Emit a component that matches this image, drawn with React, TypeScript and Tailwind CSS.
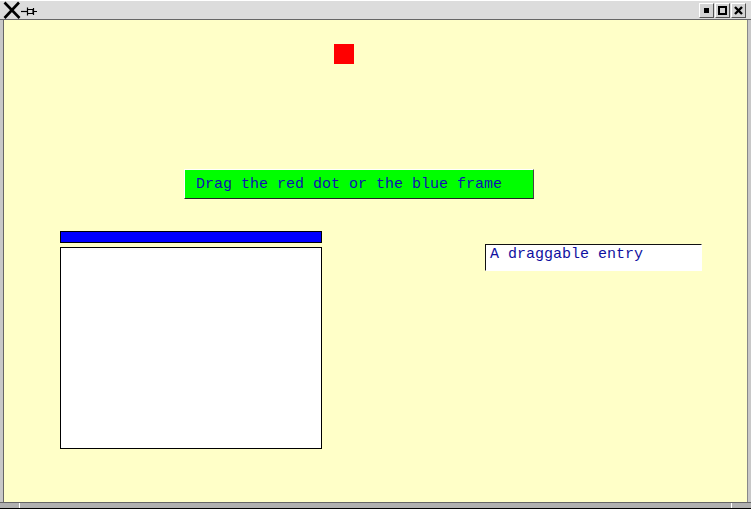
import React from "react";

const mono = { fontFamily: '"Liberation Mono", "DejaVu Sans Mono", monospace' };

function TitleButton({ children }: { children: React.ReactNode }) {
  return (
    <div className="flex h-[15px] w-[15px] items-center justify-center border border-t-white border-l-white border-b-[#555] border-r-[#555] bg-[#d4d4d4]">
      {children}
    </div>
  );
}

function TitleBar() {
  return (
    <div className="flex h-[20px] items-center justify-between border-t border-t-white border-b border-b-[#666] bg-[#dcdcdc] pl-[3px] pr-[5px]">
      <div className="flex items-center">
        <svg width="18" height="18" viewBox="0 0 18 18">
          <path d="M1.5 1.5 L16.5 17 M16 1.5 L1.5 17" stroke="#000" strokeWidth="2.6" />
        </svg>
        <svg width="17" height="17" viewBox="0 0 17 17">
          <path d="M0 9.5 H6" stroke="#000" strokeWidth="1.2" />
          <path d="M6.5 5.5 V13.5 M7 7.5 H12 V11.5 H7 M12.5 6 V13 M13 9.5 H16" stroke="#000" strokeWidth="1.2" fill="none" />
        </svg>
      </div>
      <div className="flex items-center gap-[1px]">
        <TitleButton>
          <div className="h-[5px] w-[5px] bg-black" />
        </TitleButton>
        <TitleButton>
          <div className="h-[9px] w-[9px] border-2 border-black" />
        </TitleButton>
        <TitleButton>
          <svg width="11" height="11" viewBox="0 0 11 11">
            <path d="M2 2 L9 9 M9 2 L2 9" stroke="#000" strokeWidth="2.4" />
          </svg>
        </TitleButton>
      </div>
    </div>
  );
}

export default function App() {
  return (
    <div className="flex h-[509px] w-[751px] flex-col bg-[#dcdcdc]">
      <TitleBar />
      <div className="flex flex-1">
        <div className="w-[4px] border-r border-r-[#666] bg-[#c8c8c8]" />
        <div className="relative flex-1 bg-[#ffffc8]">
          <div className="absolute left-[330px] top-[24px] h-[20px] w-[20px] bg-[#ff0000]" />

          <div
            className="absolute left-[180px] top-[149px] flex h-[30px] w-[350px] items-center border border-t-white border-l-white border-b-[#222] border-r-[#444] bg-[#00ff00] pl-[11px] text-[15px] leading-none text-[#1010b0]"
            style={mono}
          >
            Drag the red dot or the blue frame
          </div>

          <div className="absolute left-[56px] top-[211px] h-[12px] w-[262px] border border-black bg-[#0000ff]" />
          <div className="absolute left-[56px] top-[227px] h-[202px] w-[262px] border border-black bg-white" />

          <div
            className="absolute left-[481px] top-[224px] flex h-[27px] w-[217px] items-start border border-t-[#111] border-l-[#111] border-b-white border-r-white bg-white pl-[4px] pt-[2px] text-[15px] leading-[16px] text-[#1010a0]"
            style={mono}
          >
            A draggable entry
          </div>
        </div>
        <div className="w-[4px] border-l border-l-[#888] bg-[#c8c8c8]" />
      </div>
      <div className="flex h-[7px] border-t border-t-[#666] border-b border-b-black bg-[#b0b0b0]">
        <div className="w-[20px] border-r border-r-white" />
        <div className="flex-1" />
        <div className="w-[20px] border-l border-l-white" />
      </div>
    </div>
  );
}
